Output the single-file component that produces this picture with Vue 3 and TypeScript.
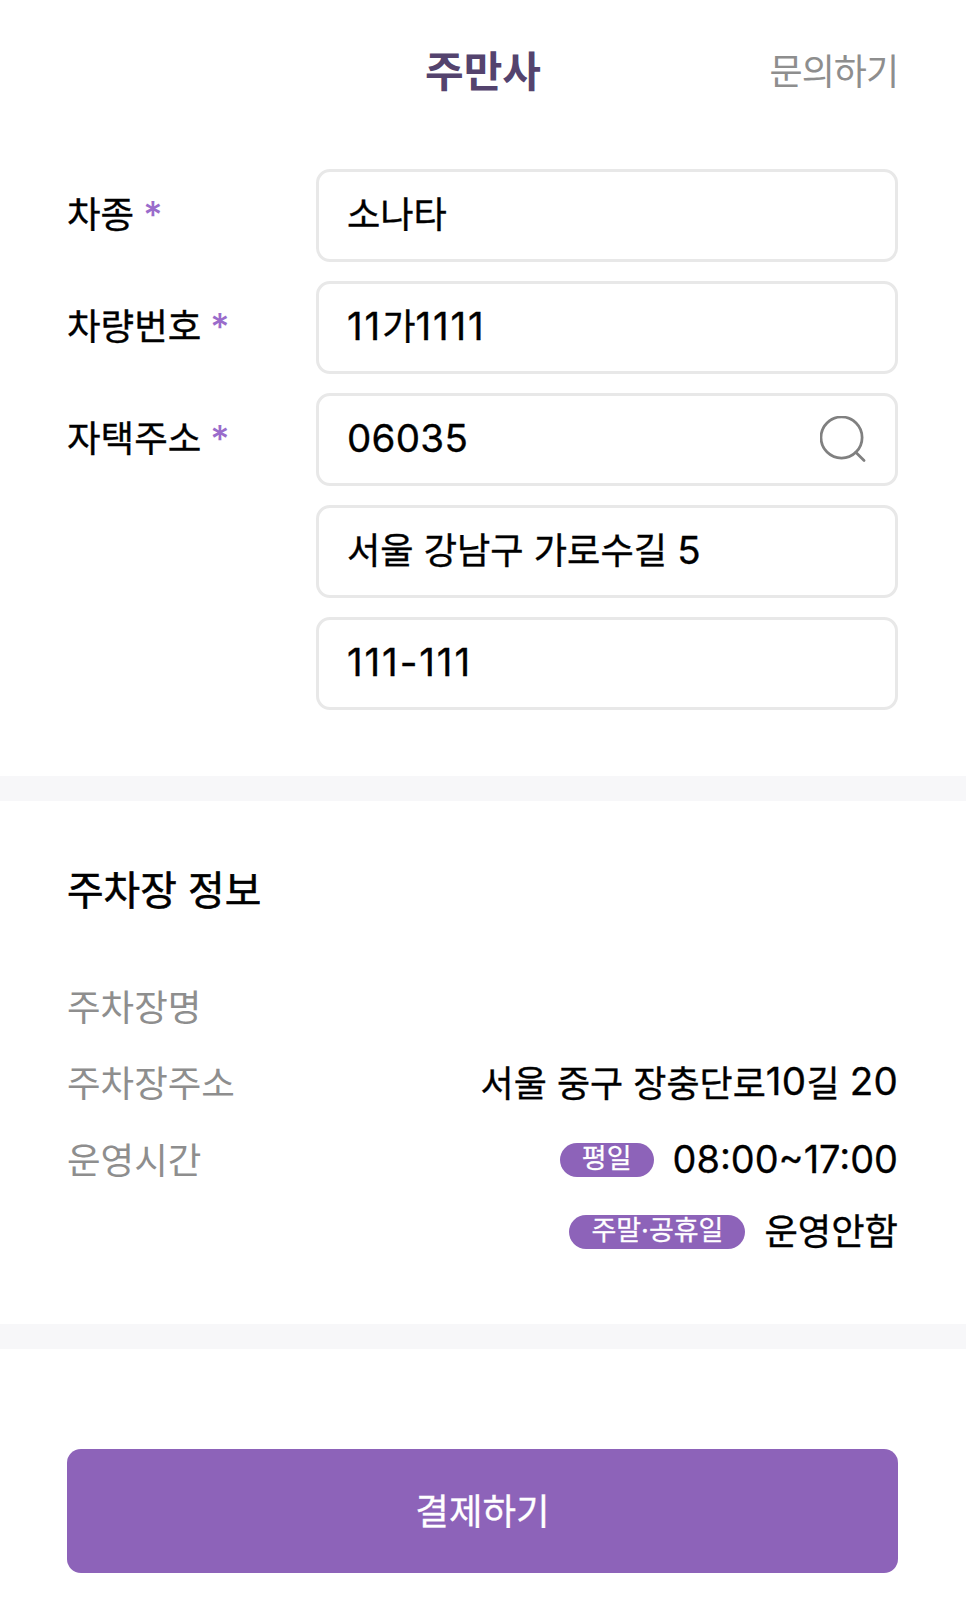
<script setup lang="ts">
interface Field { label?: string; value: string; search?: boolean }
const fields: Field[] = [
  { label: '차종', value: '소나타' },
  { label: '차량번호', value: '11가1111' },
  { label: '자택주소', value: '06035', search: true },
  { value: '서울 강남구 가로수길 5' },
  { value: '111-111' },
]
const split = (text: string) =>
  text.split(/([0-9:~\-]+)/).filter(Boolean).map((t) => ({
    t,
    num: /^[0-9:~\-]+$/.test(t),
    ones: /^[1\-]+$/.test(t),
  }))
</script>

<template>
  <div class="page">
    <header class="header">
      <h1 class="title">주만사</h1>
      <span class="inquiry">문의하기</span>
    </header>

    <section class="form">
      <div v-for="f in fields" :key="f.value" class="row">
        <div class="label">
          <template v-if="f.label">{{ f.label }}<span class="req">*</span></template>
        </div>
        <div class="input">
          <span class="text"><span v-for="p in split(f.value)" :key="p.t" :class="{ num: p.num, ones: p.ones }">{{ p.t }}</span></span>
          <svg v-if="f.search" class="search" viewBox="0 0 48 48" fill="none" stroke="#808080" stroke-width="2.8" stroke-linecap="round">
            <circle cx="22" cy="22" r="21" />
            <path d="M36.500 37 L45 45.500" />
          </svg>
        </div>
      </div>
    </section>

    <div class="divider"></div>

    <section class="info">
      <h2 class="heading">주차장 정보</h2>
      <div class="line name"><span class="key">주차장명</span></div>
      <div class="line addr">
        <span class="key">주차장주소</span>
        <span class="val"><span v-for="p in split('서울 중구 장충단로10길 20')" :key="p.t" :class="{ num: p.num }">{{ p.t }}</span></span>
      </div>
      <div class="line hours">
        <span class="key">운영시간</span>
        <span class="val"><em class="pill">평일</em><span class="time">08:00~17:00</span></span>
      </div>
      <div class="line closed">
        <span class="val"><em class="pill">주말·공휴일</em><span class="off">운영안함</span></span>
      </div>
    </section>

    <div class="divider"></div>

    <div class="foot">
      <button class="pay" type="button">결제하기</button>
    </div>
  </div>
</template>

<style>
body { background: #fff; }
</style>

<style scoped>
.page {
  width: 966px;
  height: 1607px;
  overflow: hidden;
  background: #fff;
  font-family: Inter, "Noto Sans CJK KR", sans-serif;
  color: #000;
  font-size: 36px;
}
.header {
  height: 142px;
  padding: 0 68px 5px;
  position: relative;
  display: flex;
  align-items: center;
  justify-content: flex-end;
  box-sizing: border-box;
}
.title {
  position: absolute;
  left: 0;
  right: 0;
  margin: 0;
  text-align: center;
  font-size: 42px;
  font-weight: 700;
  color: #54436e;
}
.inquiry { font-size: 36px; color: #8e8e8e; letter-spacing: -1px; }
.form {
  padding: 27px 68px 66px 67px;
  display: flex;
  flex-direction: column;
  gap: 19px;
}
.row { display: flex; }
.label {
  width: 249px;
  flex: none;
  padding-top: 23px;
  line-height: 46px;
  font-size: 36.5px;
  -webkit-text-stroke: 0.35px #000;
}
.req {
  color: #9a6ccb;
  margin-left: 9px;
  font-size: 37px;
  line-height: 40px;
  font-weight: 500;
  -webkit-text-stroke: 0;
}
.input {
  flex: 1;
  height: 93px;
  box-sizing: border-box;
  border: 3px solid #e8e8e8;
  border-radius: 14px;
  padding: 0 28px;
  display: flex;
  align-items: center;
  justify-content: space-between;
  font-size: 36.2px;
}
.text { line-height: 46px; position: relative; top: -1px; -webkit-text-stroke: 0.35px #000; }
.num { font-size: 38.5px; letter-spacing: 0.3px; }
.ones { letter-spacing: 1.9px; }
.time { font-size: 37.9px; padding-top: 2px; -webkit-text-stroke: 0.3px #000; }
.off { font-size: 36.3px; }
.search { width: 47px; height: 47px; }
.divider { height: 25px; background: #f7f7f9; }
.info { padding: 0 68px 0 67px; height: 523px; box-sizing: border-box; }
.heading {
  margin: 0;
  padding-top: 65px;
  height: 166px;
  box-sizing: border-box;
  font-size: 39.8px;
  font-weight: 400;
  line-height: 50px;
  -webkit-text-stroke: 0.6px #000;
}
.line { display: flex; justify-content: space-between; align-items: center; }
.name { height: 76px; }
.addr { height: 76px; }
.hours { height: 78px; }
.closed { height: 64px; justify-content: flex-end; }
.key { color: #8e8e8e; font-size: 36.5px; }
.val { display: flex; align-items: center; font-size: 36px; white-space: pre; -webkit-text-stroke: 0.35px #000; }
.pill {
  font-style: normal;
  background: #8d63b9;
  color: #fff;
  font-size: 27px;
  height: 34px;
  line-height: 32px;
  border-radius: 17px;
  padding: 0 22px;
  margin-top: 4px;
  margin-right: 19px;
  -webkit-text-stroke: 0.3px #fff;
}
.closed .pill { margin-top: 6px; }
.foot { padding: 100px 68px 0 67px; }
.pay {
  display: block;
  width: 100%;
  height: 124px;
  border: 0;
  border-radius: 14px;
  background: #8d63b9;
  color: #fff;
  font: inherit;
  font-size: 36.5px;
  padding-bottom: 4px;
  -webkit-text-stroke: 0.3px #fff;
}
</style>
